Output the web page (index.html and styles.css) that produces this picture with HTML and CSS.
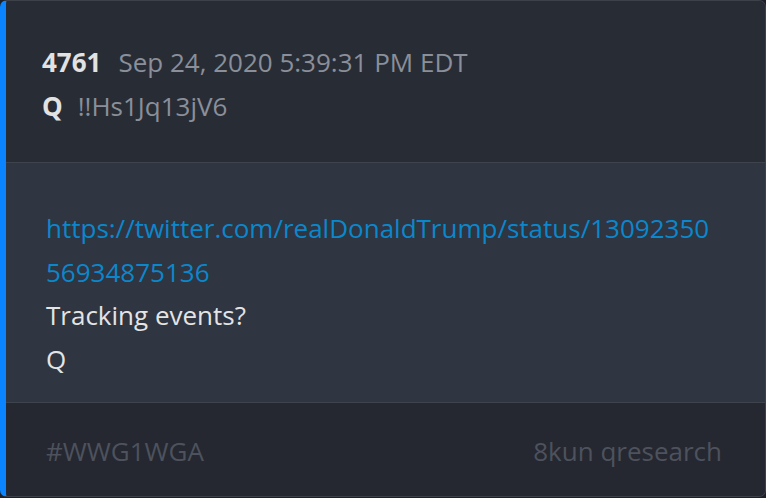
FILE: index.html
```html
<!DOCTYPE html>
<html>
<head>
<meta charset="utf-8">
<link rel="stylesheet" href="styles.css">
</head>
<body>
<div class="card">
  <div class="head">
    <div class="row1"><span class="num">4761</span><span class="date">Sep 24, 2020 5:39:31 PM EDT</span></div>
    <div class="row2"><span class="author">Q</span><span class="trip">!!Hs1Jq13jV6</span></div>
  </div>
  <div class="body">
    <a class="link" href="#">https://twitter.com/realDonaldTrump/status/1309235056934875136</a>
    <div class="text">Tracking events?</div>
    <div class="text">Q</div>
  </div>
  <div class="foot">
    <span>#WWG1WGA</span>
    <span>8kun qresearch</span>
  </div>
</div>
</body>
</html>
```
FILE: styles.css
```css
html, body {
  margin: 0;
  padding: 0;
  background: #1e2027;
}
body {
  width: 766px;
  height: 498px;
  font-family: "Open Sans", "Liberation Sans", sans-serif;
}
.card {
  box-sizing: border-box;
  width: 766px;
  height: 497px;
  border: 1px solid #3d414a;
  border-left: 6px solid #0a84ff;
  border-radius: 7px;
  overflow: hidden;
  display: flex;
  flex-direction: column;
  background: #282c35;
}
.head {
  height: 162px;
  flex: none;
  box-sizing: border-box;
  padding: 39px 36px 0;
  border-bottom: 1px solid #3e434c;
  background: #282c35;
}
.row1, .row2 {
  display: flex;
  align-items: baseline;
  font-size: 26px;
  line-height: 44px;
}
.num {
  font-weight: 700;
  color: #e2e2e2;
  margin-right: 17px;
}
.date {
  color: #8a8f99;
}
.author {
  font-weight: 700;
  color: #e2e2e2;
  margin-right: 15px;
}
.trip {
  color: #8a8f99;
}
.body {
  flex: 1;
  box-sizing: border-box;
  padding: 44px 50px 0 40px;
  background: #2f3541;
  border-bottom: 1px solid #3e434c;
  font-size: 26px;
  line-height: 43.5px;
}
.link {
  display: block;
  color: #0b87cc;
  text-decoration: none;
  word-break: break-all;
}
.text {
  color: #e4e4e4;
}
.foot {
  height: 93px;
  flex: none;
  box-sizing: border-box;
  padding: 2px 43px 0 40px;
  display: flex;
  justify-content: space-between;
  align-items: center;
  background: #252830;
  color: #4d525d;
  font-size: 26px;
}
```
